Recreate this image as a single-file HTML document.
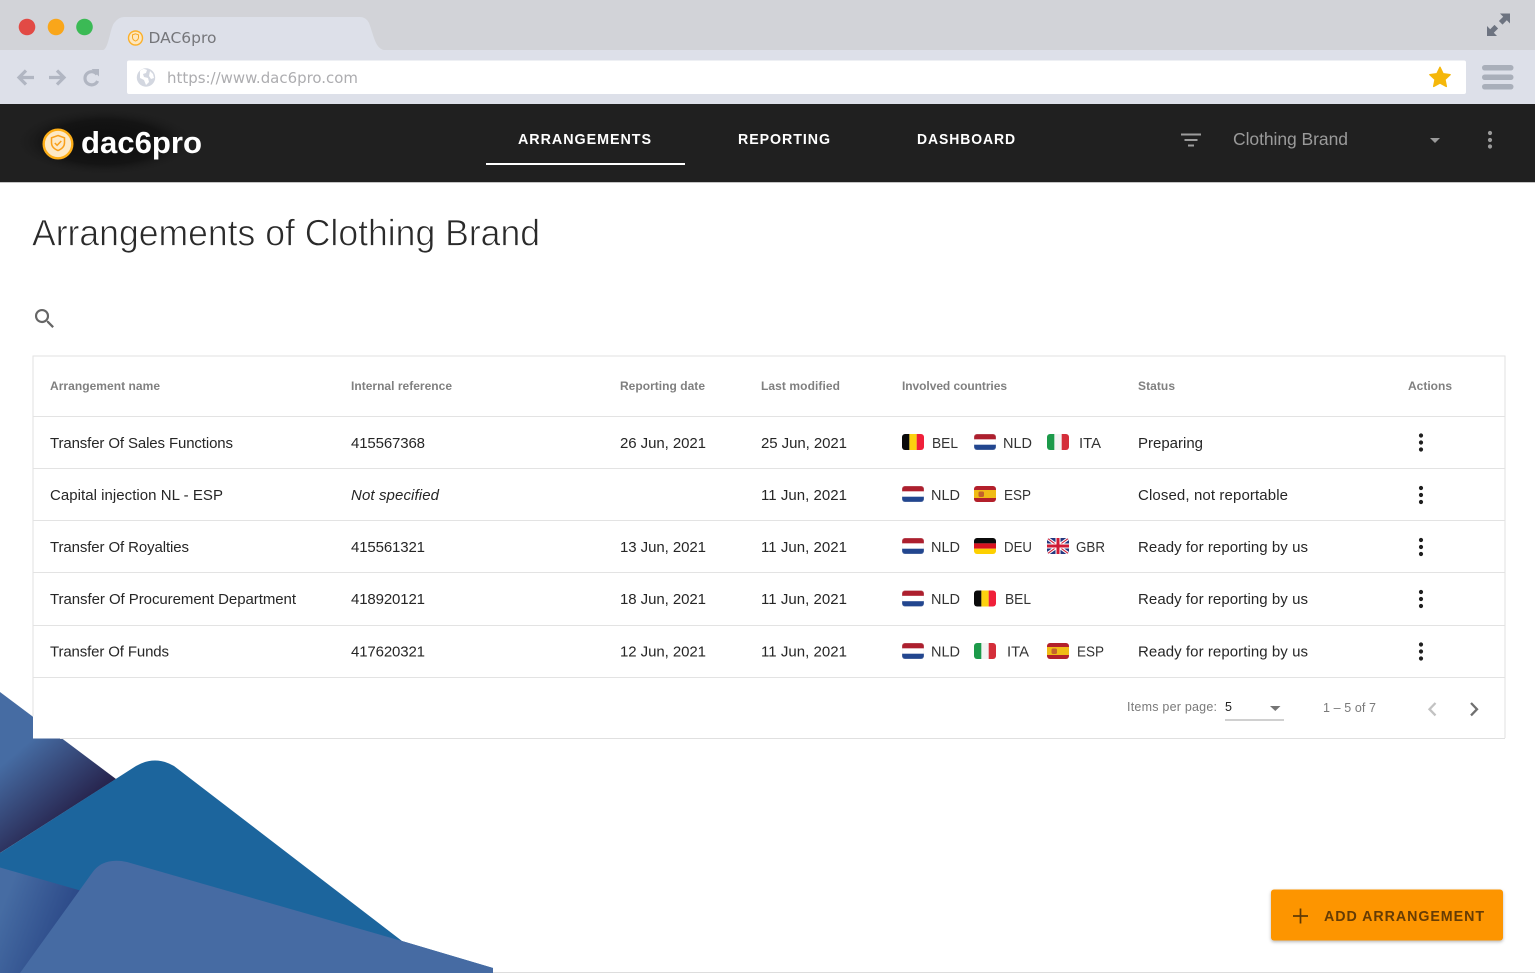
<!DOCTYPE html>
<html lang="en"><head><meta charset="utf-8"><title>DAC6pro</title>
<style>
html,body{margin:0;padding:0;background:#fff;width:1535px;height:973px;overflow:hidden}
svg{display:block}
text{font-family:"Liberation Sans",sans-serif}
.h{font-size:12px;font-weight:bold;fill:#808080}
.c{font-size:15px;fill:#262626}
.f{font-size:14.5px;fill:#333}
.n{font-size:15px;font-weight:bold;fill:#fff;letter-spacing:1px}
.p{font-size:12.5px;fill:#7a7a7a}
</style></head><body>
<svg width="1535" height="973" viewBox="0 0 1535 973" xmlns="http://www.w3.org/2000/svg">
<defs>
<linearGradient id="g1" gradientUnits="userSpaceOnUse" x1="25" y1="745" x2="85" y2="815"><stop offset="0" stop-color="#466ca3"/><stop offset="1" stop-color="#241d45"/></linearGradient>
<linearGradient id="g2" gradientUnits="userSpaceOnUse" x1="5" y1="900" x2="70" y2="925"><stop offset="0" stop-color="#466ca3"/><stop offset="1" stop-color="#2b4887"/></linearGradient>
<radialGradient id="glow"><stop offset="0" stop-color="#0d0d0d"/><stop offset=".65" stop-color="#111" stop-opacity=".8"/><stop offset="1" stop-color="#202020" stop-opacity="0"/></radialGradient>
<clipPath id="fc"><rect width="22" height="16" rx="3"/></clipPath>
<symbol id="bel" width="22" height="16" overflow="visible"><g clip-path="url(#fc)"><rect width="7.4" height="16" fill="#0a0a0a"/><rect x="7.4" width="7.4" height="16" fill="#fcd20f"/><rect x="14.7" width="7.4" height="16" fill="#f0203a"/></g></symbol>
<symbol id="nld" width="22" height="16" overflow="visible"><g clip-path="url(#fc)"><rect width="22" height="5.4" fill="#ad1f2e"/><rect y="5.4" width="22" height="5.3" fill="#fff"/><rect y="10.7" width="22" height="5.3" fill="#22468f"/></g><rect x=".25" y=".25" width="21.5" height="15.5" rx="3" fill="none" stroke="#ddd" stroke-opacity=".35" stroke-width=".5"/></symbol>
<symbol id="ita" width="22" height="16" overflow="visible"><g clip-path="url(#fc)"><rect width="7.4" height="16" fill="#1c9a4a"/><rect x="7.4" width="7.4" height="16" fill="#f3f3f3"/><rect x="14.7" width="7.4" height="16" fill="#d42e3a"/></g></symbol>
<symbol id="esp" width="22" height="16" overflow="visible"><g clip-path="url(#fc)"><rect width="22" height="4" fill="#b3202b"/><rect y="4" width="22" height="8" fill="#f0bb16"/><rect y="12" width="22" height="4" fill="#b3202b"/><rect x="4.5" y="5.5" width="5.5" height="5.5" rx="1.5" fill="#c4622c"/></g></symbol>
<symbol id="deu" width="22" height="16" overflow="visible"><g clip-path="url(#fc)"><rect width="22" height="5.4" fill="#0b0b0b"/><rect y="5.4" width="22" height="5.3" fill="#d9121f"/><rect y="10.7" width="22" height="5.3" fill="#fdd000"/></g></symbol>
<symbol id="gbr" width="22" height="16" overflow="visible"><g clip-path="url(#fc)"><rect width="22" height="16" fill="#24367e"/><path d="M0 0L22 16M22 0L0 16" stroke="#fff" stroke-width="3.2"/><path d="M0 0L22 16M22 0L0 16" stroke="#cf1b35" stroke-width="1.1"/><path d="M11 0V16M0 8H22" stroke="#fff" stroke-width="5"/><path d="M11 0V16M0 8H22" stroke="#cf1b35" stroke-width="3"/></g></symbol>
<symbol id="dots" width="6" height="20" overflow="visible"><circle cx="3" cy="3" r="2.1" fill="#1f1f1f"/><circle cx="3" cy="10" r="2.1" fill="#1f1f1f"/><circle cx="3" cy="17" r="2.1" fill="#1f1f1f"/></symbol>
</defs>

<!-- browser chrome -->
<rect width="1535" height="50" fill="#d2d3d8"/>
<rect y="50" width="1535" height="54" fill="#dde0e9"/>
<path d="M103 50C109 49 110 26 115 22Q119 17 124 17H360Q366 17 369 23C374 36 375 48 384 50Z" fill="#dde0e9"/>
<circle cx="27" cy="27" r="8.3" fill="#e24a45"/>
<circle cx="56" cy="27" r="8.3" fill="#f9a61a"/>
<circle cx="84.5" cy="27" r="8.3" fill="#3bba55"/>
<circle cx="135.5" cy="38" r="7" fill="#fde7bf" stroke="#fbb02a" stroke-width="1.4"/>
<path d="M135.5 33.8l3 1.1v2.5c0 1.8-1.3 3-3 3.7-1.7-.7-3-1.9-3-3.7v-2.5z" fill="none" stroke="#f7a823" stroke-width="1"/>
<text x="148.5" y="43" font-size="15" style="font-family:'DejaVu Sans',sans-serif" fill="#75767a" textLength="68" lengthAdjust="spacingAndGlyphs">DAC6pro</text>
<path d="M1500 13.5h10v10l-3.2-3.2-4.3 4.3-3.6-3.6 4.3-4.3zM1497 36h-10v-10l3.2 3.2 4.3-4.3 3.6 3.6-4.3 4.3z" fill="#6d7380"/>
<g fill="none" stroke="#b1b6c2" stroke-width="3.2">
<path d="M34 77.5H20M26 70.5l-7 7 7 7"/>
<path d="M49 77.5H63M57 70.5l7 7-7 7"/>
<path d="M97 74.5A6.6 6.6 0 1 0 97.6 81"/>
</g>
<path d="M91.5 69h7.5v7.5z" fill="#b1b6c2"/>
<rect x="127" y="60.5" width="1339" height="33.5" rx="2" fill="#fff"/>
<circle cx="146" cy="77.5" r="9.2" fill="#d3d7e0"/>
<path d="M140 71c3-3 5-2 7-1l-1 3-3 1 1 3 4 1 1 4-3 3-2-5-4-2zM150 71l3 3 1 4-3 1-2-3z" fill="#fff"/>
<text x="167" y="83" font-size="15.5" style="font-family:'DejaVu Sans',sans-serif" fill="#adadb0" textLength="191" lengthAdjust="spacingAndGlyphs">https://www.dac6pro.com</text>
<path d="M1440 67.2l3.1 6.5 7.1.9-5.2 4.9 1.4 7-6.4-3.5-6.4 3.5 1.4-7-5.2-4.9 7.1-.9z" fill="#f5b70a" stroke="#f5b70a" stroke-width="1.3" stroke-linejoin="round"/>
<rect x="1482" y="65" width="31.5" height="5.5" rx="2.7" fill="#a9afba"/>
<rect x="1482" y="74.5" width="31.5" height="5.5" rx="2.7" fill="#a9afba"/>
<rect x="1482" y="84" width="31.5" height="5.5" rx="2.7" fill="#a9afba"/>

<!-- app nav -->
<rect y="104" width="1535" height="78" fill="#202020"/>
<rect y="182" width="1535" height="1" fill="#c4c4c4"/>
<ellipse cx="105" cy="142" rx="92" ry="34" fill="url(#glow)"/>
<circle cx="58" cy="144" r="14.3" fill="#fde9c6" stroke="#fdae17" stroke-width="2.4"/>
<path d="M58 135.5l6.5 2.3v5c0 3.8-2.8 6.3-6.5 7.8-3.7-1.5-6.5-4-6.5-7.8v-5z" fill="none" stroke="#f9a01b" stroke-width="1.5"/>
<path d="M54.8 143l2.3 2.3 4.2-4.3" fill="none" stroke="#f9a01b" stroke-width="1.5"/>
<text x="81" y="153" font-size="31" font-weight="bold" fill="#fff" textLength="121" lengthAdjust="spacingAndGlyphs">dac6pro</text>
<text class="n" x="518" y="144" textLength="134" lengthAdjust="spacingAndGlyphs">ARRANGEMENTS</text>
<rect x="486" y="163" width="199" height="2" fill="#fff"/>
<text class="n" x="738" y="144" textLength="93" lengthAdjust="spacingAndGlyphs">REPORTING</text>
<text class="n" x="917" y="144" textLength="99" lengthAdjust="spacingAndGlyphs">DASHBOARD</text>
<path d="M1181 133.5h20v2h-20zM1184.5 139h13v2h-13zM1188 144.5h6v2h-6z" fill="#9c9c9c"/>
<text x="1233" y="145" font-size="17.5" fill="#9a9a9a" textLength="115">Clothing Brand</text>
<path d="M1430 138h10l-5 5z" fill="#9a9a9a"/>
<circle cx="1490" cy="133" r="2.1" fill="#9a9a9a"/><circle cx="1490" cy="140" r="2.1" fill="#9a9a9a"/><circle cx="1490" cy="146.5" r="2.1" fill="#9a9a9a"/>

<!-- page -->
<text x="32" y="245.5" font-size="37" fill="#2a2a2a" stroke="#fff" stroke-width=".75" textLength="508" lengthAdjust="spacingAndGlyphs">Arrangements of Clothing Brand</text>
<path transform="translate(31.7 305.7) scale(1.086)" fill="#666" d="M15.5 14h-.79l-.28-.27A6.471 6.471 0 0 0 16 9.5 6.5 6.5 0 1 0 9.5 16c1.61 0 3.09-.59 4.23-1.57l.27.28v.79l5 4.99L20.49 19l-4.99-5zm-6 0C7.01 14 5 11.99 5 9.5S7.01 5 9.5 5 14 7.01 14 9.5 11.99 14 9.5 14z"/>

<!-- decorative background -->
<path d="M0 692L116 779 0 853z" fill="url(#g1)"/>
<path d="M0 853L136 766Q155 755 174 766L402 941 493 968V973H0z" fill="#1c659d"/>
<path d="M0 867.5L82 891 22 973H0z" fill="url(#g2)"/>
<path d="M20 973L92 873Q103 857 127 862L402 941 493 968V973z" fill="#466ba3"/>
<rect x="493" y="972" width="1042" height="1" fill="#ddd"/>

<!-- table card -->
<rect x="33" y="355.5" width="1472" height="383" fill="#fff"/>
<path d="M33 716V356H1505V738" fill="none" stroke="#e2e2e2"/>
<path d="M60 738.5H1505" stroke="#e0e0e0"/>
<g stroke="#e3e3e3"><path d="M33 416.5H1505M33 468.5H1505M33 520.5H1505M33 572.5H1505M33 625.5H1505M33 677.5H1505"/></g>

<text class="h" x="50" y="390" textLength="110">Arrangement name</text>
<text class="h" x="351" y="390" textLength="101">Internal reference</text>
<text class="h" x="620" y="390" textLength="85">Reporting date</text>
<text class="h" x="761" y="390" textLength="79">Last modified</text>
<text class="h" x="902" y="390" textLength="105">Involved countries</text>
<text class="h" x="1138" y="390" textLength="37">Status</text>
<text class="h" x="1408" y="390" textLength="44">Actions</text>

<!-- row 1 -->
<text class="c" x="50" y="448" textLength="183">Transfer Of Sales Functions</text>
<text class="c" x="351" y="448" textLength="74">415567368</text>
<text class="c" x="620" y="448" textLength="86">26 Jun, 2021</text>
<text class="c" x="761" y="448" textLength="86">25 Jun, 2021</text>
<use href="#bel" x="902" y="434"/><text class="f" x="932" y="448" textLength="26" lengthAdjust="spacingAndGlyphs">BEL</text>
<use href="#nld" x="974" y="434"/><text class="f" x="1003" y="448" textLength="29" lengthAdjust="spacingAndGlyphs">NLD</text>
<use href="#ita" x="1047" y="434"/><text class="f" x="1079" y="448" textLength="22" lengthAdjust="spacingAndGlyphs">ITA</text>
<text class="c" x="1138" y="448" textLength="65">Preparing</text>
<use href="#dots" x="1418" y="432.5"/>

<!-- row 2 -->
<text class="c" x="50" y="500" textLength="173">Capital injection NL - ESP</text>
<text class="c" x="351" y="500" font-style="italic" textLength="88">Not specified</text>
<text class="c" x="761" y="500" textLength="86">11 Jun, 2021</text>
<use href="#nld" x="902" y="486"/><text class="f" x="931" y="500" textLength="29" lengthAdjust="spacingAndGlyphs">NLD</text>
<use href="#esp" x="974" y="486"/><text class="f" x="1004" y="500" textLength="27" lengthAdjust="spacingAndGlyphs">ESP</text>
<text class="c" x="1138" y="500" textLength="150">Closed, not reportable</text>
<use href="#dots" x="1418" y="485"/>

<!-- row 3 -->
<text class="c" x="50" y="552" textLength="139">Transfer Of Royalties</text>
<text class="c" x="351" y="552" textLength="74">415561321</text>
<text class="c" x="620" y="552" textLength="86">13 Jun, 2021</text>
<text class="c" x="761" y="552" textLength="86">11 Jun, 2021</text>
<use href="#nld" x="902" y="538"/><text class="f" x="931" y="552" textLength="29" lengthAdjust="spacingAndGlyphs">NLD</text>
<use href="#deu" x="974" y="538"/><text class="f" x="1004" y="552" textLength="28" lengthAdjust="spacingAndGlyphs">DEU</text>
<use href="#gbr" x="1047" y="538"/><text class="f" x="1076" y="552" textLength="29" lengthAdjust="spacingAndGlyphs">GBR</text>
<text class="c" x="1138" y="552" textLength="170">Ready for reporting by us</text>
<use href="#dots" x="1418" y="537"/>

<!-- row 4 -->
<text class="c" x="50" y="604" textLength="246">Transfer Of Procurement Department</text>
<text class="c" x="351" y="604" textLength="74">418920121</text>
<text class="c" x="620" y="604" textLength="86">18 Jun, 2021</text>
<text class="c" x="761" y="604" textLength="86">11 Jun, 2021</text>
<use href="#nld" x="902" y="590.5"/><text class="f" x="931" y="604" textLength="29" lengthAdjust="spacingAndGlyphs">NLD</text>
<use href="#bel" x="974" y="590.5"/><text class="f" x="1005" y="604" textLength="26" lengthAdjust="spacingAndGlyphs">BEL</text>
<text class="c" x="1138" y="604" textLength="170">Ready for reporting by us</text>
<use href="#dots" x="1418" y="589"/>

<!-- row 5 -->
<text class="c" x="50" y="656.5" textLength="119">Transfer Of Funds</text>
<text class="c" x="351" y="656.5" textLength="74">417620321</text>
<text class="c" x="620" y="656.5" textLength="86">12 Jun, 2021</text>
<text class="c" x="761" y="656.5" textLength="86">11 Jun, 2021</text>
<use href="#nld" x="902" y="643"/><text class="f" x="931" y="656.5" textLength="29" lengthAdjust="spacingAndGlyphs">NLD</text>
<use href="#ita" x="974" y="643"/><text class="f" x="1007" y="656.5" textLength="22" lengthAdjust="spacingAndGlyphs">ITA</text>
<use href="#esp" x="1047" y="643"/><text class="f" x="1077" y="656.5" textLength="27" lengthAdjust="spacingAndGlyphs">ESP</text>
<text class="c" x="1138" y="656.5" textLength="170">Ready for reporting by us</text>
<use href="#dots" x="1418" y="641.5"/>

<!-- pagination -->
<text class="p" x="1127" y="711" textLength="90">Items per page:</text>
<text x="1225" y="711" font-size="12.5" fill="#222" textLength="7">5</text>
<path d="M1270 706h10.5l-5.2 5z" fill="#757575"/>
<rect x="1225" y="719.5" width="59" height="1" fill="#a0a0a0"/>
<text class="p" x="1323" y="712" textLength="53">1 – 5 of 7</text>
<path d="M1435.5 703l-6 6.2 6 6.2" fill="none" stroke="#c2c2c2" stroke-width="2.3"/>
<path d="M1471 703l6 6.2-6 6.2" fill="none" stroke="#707070" stroke-width="2.3"/>

<!-- button -->
<rect x="1271" y="889.5" width="232" height="51" rx="3" fill="#000" fill-opacity=".28" transform="translate(0 1.5)" style="filter:blur(1.5px)"/>
<rect x="1271" y="889.5" width="232" height="51" rx="3" fill="#fd9500"/>
<path d="M1293 916h15M1300.5 908.5v15" stroke="#5f3a05" stroke-width="1.7"/>
<text x="1324" y="921" font-size="15" font-weight="bold" fill="#663c04" letter-spacing="1" textLength="161" lengthAdjust="spacingAndGlyphs">ADD ARRANGEMENT</text>
</svg>
</body></html>
